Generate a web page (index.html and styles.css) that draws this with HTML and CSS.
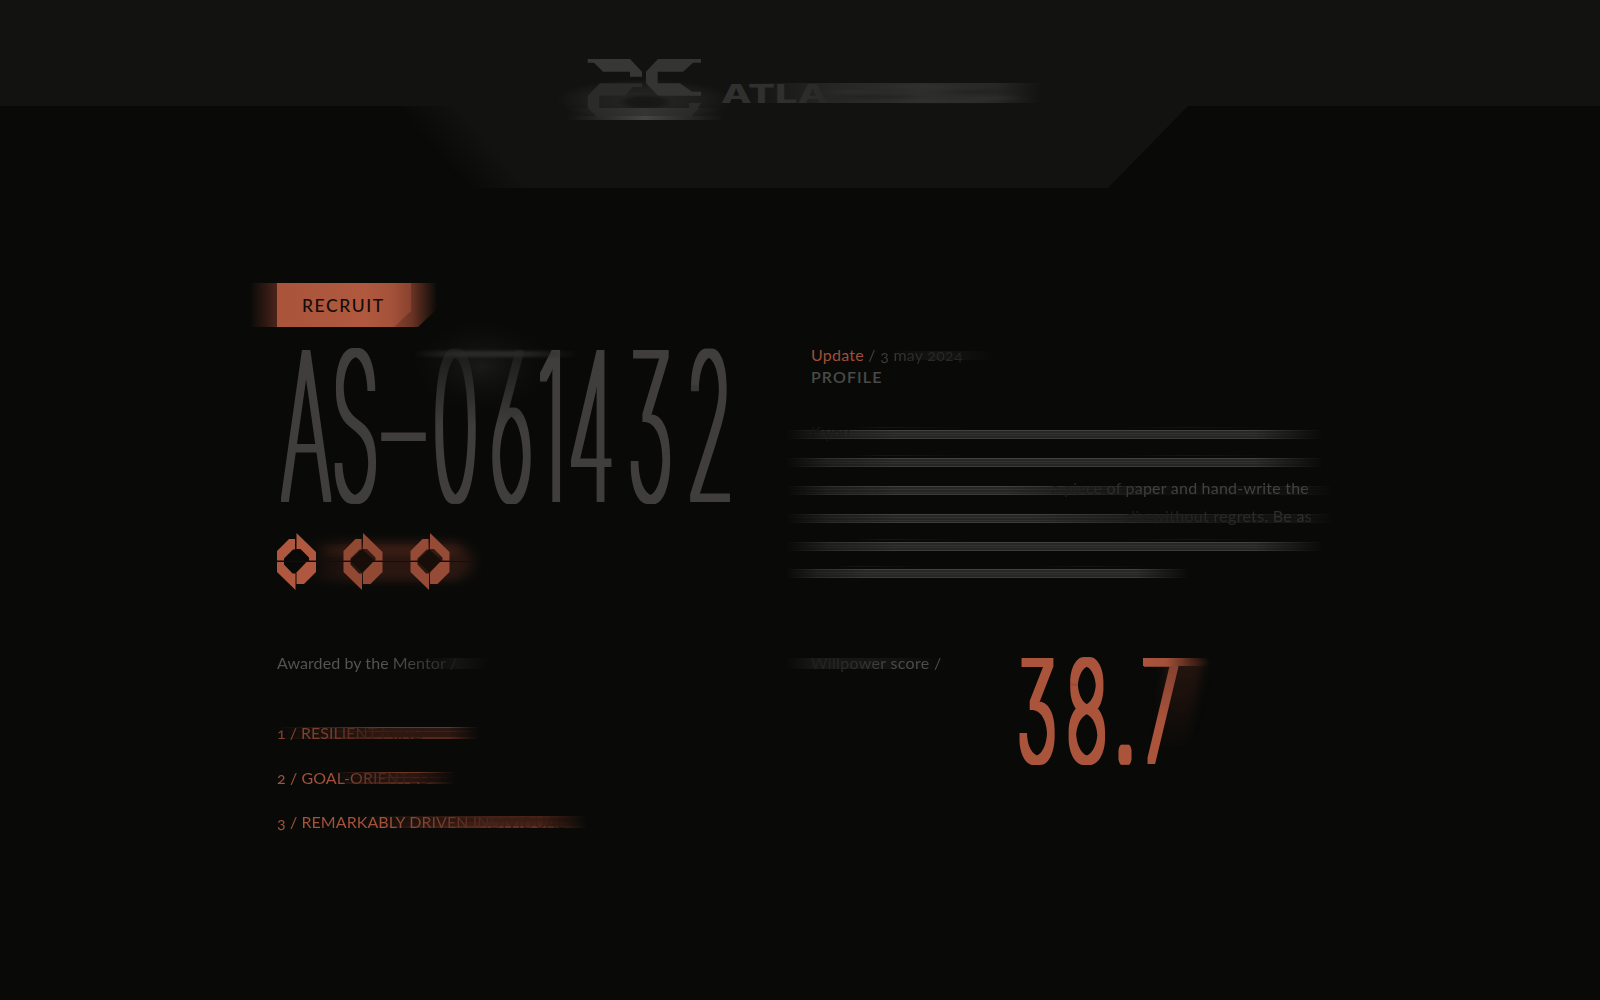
FILE: index.html
```html
<!DOCTYPE html>
<html lang="en">
<head>
<meta charset="utf-8">
<title>Recruit AS-061432</title>
<link rel="stylesheet" href="styles.css">
</head>
<body>
<header class="header">
  <svg class="header-art" width="1600" height="200" viewBox="0 0 1600 200">
    <defs>
      <linearGradient id="slope" gradientUnits="userSpaceOnUse" x1="396" y1="106" x2="432" y2="75">
        <stop offset="0" stop-color="#121311" stop-opacity="0"/><stop offset="1" stop-color="#121311"/>
      </linearGradient>
      <linearGradient id="sweep" x1="0" x2="1">
        <stop offset="0" stop-color="#2b2b29" stop-opacity="0"/><stop offset=".25" stop-color="#2b2b29"/><stop offset=".5" stop-color="#454543"/><stop offset=".75" stop-color="#2b2b29"/><stop offset="1" stop-color="#2b2b29" stop-opacity="0"/>
      </linearGradient>
      <radialGradient id="haze">
        <stop offset="0" stop-color="#272725"/><stop offset=".6" stop-color="#272725" stop-opacity=".6"/><stop offset="1" stop-color="#272725" stop-opacity="0"/>
      </radialGradient>
      <radialGradient id="core">
        <stop offset="0" stop-color="#161715"/><stop offset=".6" stop-color="#161715" stop-opacity=".8"/><stop offset="1" stop-color="#161715" stop-opacity="0"/>
      </radialGradient>
      <linearGradient id="wordTrail" gradientUnits="userSpaceOnUse" x1="740" y1="0" x2="1042" y2="0">
        <stop offset="0" stop-color="#242422" stop-opacity="0"/><stop offset=".3" stop-color="#262624"/><stop offset=".6" stop-color="#2e2e2c"/><stop offset=".85" stop-color="#272725"/><stop offset="1" stop-color="#252523" stop-opacity="0"/>
      </linearGradient>
      <linearGradient id="word" gradientUnits="userSpaceOnUse" x1="720" y1="0" x2="830" y2="0">
        <stop offset="0" stop-color="#30302e"/><stop offset=".6" stop-color="#30302e"/><stop offset="1" stop-color="#282826"/>
      </linearGradient>
      <filter id="soft" x="-20%" y="-80%" width="140%" height="260%" color-interpolation-filters="sRGB"><feGaussianBlur stdDeviation="10 1.2"/></filter>
    </defs>
    <path d="M0 0H1600V106H1188L1108 188H514L430 106H0Z" fill="#121311"/>
    <path d="M396 106H530V188H466Z" fill="#090a08"/>
    <path d="M396 106H530V188H466Z" fill="url(#slope)"/>
    <ellipse cx="644" cy="100" rx="88" ry="21" fill="url(#haze)"/>
    <path d="M587.700 59H630l12 12.700v5h-12v-5h-27l-9-9h-6.300z" fill="#373735"/>
    <path d="M658 59h43v3.700h-8l-10 9h-25.300v11.600H680l12 8.400h9v4h-43l-12-12.400V71.700z" fill="#343432"/>
    <path d="M600 83.300h42V87h-9l-8 8.700h-25.700V108h-11.600V95.700z" fill="#2b2b29"/>
    <path d="M689 103h12l-3 5h-9z" fill="#2b2b29"/>
    <ellipse cx="645" cy="102" rx="28" ry="8" fill="url(#core)"/>
    <rect x="566" y="108" width="158" height="8" fill="url(#sweep)" opacity=".6"/>
    <path d="M588 108h111l-9 10h-92z" fill="#333331" opacity=".5"/>
    <rect x="566" y="116" width="158" height="4" fill="url(#sweep)"/>
    <rect x="740" y="83" width="302" height="20" fill="url(#wordTrail)"/>
    <g filter="url(#soft)" fill="none" stroke="#343432" stroke-width="3" opacity=".5">
      <path d="M832 92h35M900 87h50M900 101h90M970 98h45"/>
      <path d="M850 97h60M950 92h62" stroke="#1d1e1c"/>
    </g>
    <text class="wordmark" x="721" y="102.500" textLength="107" lengthAdjust="spacingAndGlyphs" fill="url(#word)">ATLA</text>
  </svg>
</header>

<main class="board">
  <section class="identity">
    <div class="badge"><span class="badge-face">RECRUIT</span></div>
    <svg class="serial" width="520" height="190" viewBox="250 330 520 190">
      <defs>
        <linearGradient id="fadeDigits" gradientUnits="userSpaceOnUse" x1="0" y1="-150" x2="0" y2="-70">
          <stop offset="0" stop-color="#191918"/><stop offset=".35" stop-color="#262625"/><stop offset="1" stop-color="#403e3d"/>
        </linearGradient>
        <linearGradient id="cap" x1="0" x2="1">
          <stop offset="0" stop-color="#2a2a29" stop-opacity="0"/><stop offset=".3" stop-color="#2b2b2a"/><stop offset=".6" stop-color="#2b2b2a"/><stop offset="1" stop-color="#2a2a29" stop-opacity="0"/>
        </linearGradient>
        <radialGradient id="smoke">
          <stop offset="0" stop-color="#1a1a19"/><stop offset="1" stop-color="#0d0e0c" stop-opacity="0"/>
        </radialGradient>
        <filter id="fine" x="-10%" y="-60%" width="120%" height="220%" color-interpolation-filters="sRGB"><feGaussianBlur stdDeviation="1.5"/></filter>
        <filter id="thicken" filterUnits="userSpaceOnUse" x="250" y="330" width="520" height="190" color-interpolation-filters="sRGB"><feMorphology operator="dilate" radius="3 2"/></filter>
      </defs>
      <path d="M410 352H560V430H410Z" fill="none"/>
      <ellipse cx="482" cy="366" rx="72" ry="48" fill="url(#smoke)"/>
      <g filter="url(#thicken)">
        <g class="tall" transform="translate(0 500) scale(.38 1)">
          <text class="serial-text" x="806 935.5 1062 1199 1346 1452 1556 1711 1868">AS–<tspan fill="url(#fadeDigits)">06</tspan>1432</text>
        </g>
      </g>
      <rect x="413" y="351" width="165" height="6" fill="url(#cap)" filter="url(#fine)"/>
    </svg>
    <svg class="medals" width="240" height="80" viewBox="260 520 240 80">
      <defs>
        <filter id="glow" x="-20%" y="-40%" width="140%" height="180%" color-interpolation-filters="sRGB"><feGaussianBlur stdDeviation="7 4"/></filter>
        <linearGradient id="ember" x1="0" x2="1"><stop offset="0" stop-color="#52271c" stop-opacity=".15"/><stop offset=".3" stop-color="#52271c" stop-opacity=".65"/><stop offset="1" stop-color="#52271c" stop-opacity=".65"/></linearGradient>
        <g id="medal">
          <path d="M0 21.500V12L12 0h6v10.500h-2L7 19.500v2z"/>
          <path d="M19.500-6L39 13v8.500h-7V18.500L23.500 10h-4z"/>
          <path d="M0 23h7v2.500l8.500 9h3V51L0 33z"/>
          <path d="M29.500 23H39v10L27 45h-7.500V33.500z"/>
        </g>
      </defs>
      <path d="M315 541h142l14 13v17l-14 10H315z" fill="url(#ember)" filter="url(#glow)" opacity=".7"/>
      <rect x="326" y="547" width="132" height="7" fill="#743521" filter="url(#glow)" opacity=".3"/>
      <path d="M362 549l13 12-13 11-12-11zM429 549l13 12-13 11-12-11z" fill="#170e0a"/>
      <use href="#medal" x="277" y="539" fill="#af583f"/>
      <use href="#medal" x="343.500" y="539" fill="#924934"/>
      <use href="#medal" x="410.500" y="539" fill="#964b36"/>
      <path d="M277 561.500H472" stroke="#160d09" stroke-width="1"/>
    </svg>
    <p class="label awarded"><span>Awarded by the Mentor /</span></p>
    <ol class="traits">
      <li class="trait trait-one"><span>1 / RESILIENT MIND</span></li>
      <li class="trait trait-two"><span>2 / GOAL-ORIENTED</span></li>
      <li class="trait trait-three"><span>3 / REMARKABLY DRIVEN INDIVIDUAL</span></li>
    </ol>
  </section>

  <section class="profile">
    <p class="update"><span class="accent">Update</span> <span class="date">/ 3 may 2024</span></p>
    <h2 class="title">PROFILE</h2>
    <div class="lines">
      <p class="line line-start"><span class="ghost">If you</span></p>
      <p class="line"></p>
      <p class="line line-open"><span class="reveal">a piece of paper and hand-write the</span></p>
      <p class="line line-half"><span class="reveal dim">die without regrets. Be as</span></p>
      <p class="line"></p>
      <p class="line line-short"></p>
    </div>
    <div class="score">
      <p class="label willpower"><span>Willpower score /</span></p>
      <svg class="score-value" width="220" height="140" viewBox="1005 640 220 140">
        <defs>
          <linearGradient id="seven" gradientUnits="userSpaceOnUse" x1="0" y1="-104" x2="0" y2="-35">
            <stop offset="0" stop-color="#7d3f2e"/><stop offset="1" stop-color="#ab543c"/>
          </linearGradient>
          <linearGradient id="flare" x1="0" x2="1"><stop offset="0" stop-color="#ab543c"/><stop offset=".35" stop-color="#a3503a"/><stop offset=".6" stop-color="#6d3526"/><stop offset="1" stop-color="#4a2318" stop-opacity="0"/></linearGradient>
          <linearGradient id="ash" x1="0" y1="0" x2="0" y2="1"><stop offset="0" stop-color="#3a1c14" stop-opacity=".6"/><stop offset="1" stop-color="#3a1c14" stop-opacity="0"/></linearGradient>
          <filter id="blur" x="-40%" y="-20%" width="180%" height="140%" color-interpolation-filters="sRGB"><feGaussianBlur stdDeviation="5 1"/></filter>
          <filter id="thickenScore" filterUnits="userSpaceOnUse" x="1005" y="640" width="220" height="140" color-interpolation-filters="sRGB"><feMorphology operator="dilate" radius="3 3"/></filter>
        </defs>
        <path d="M1166 660h38l-18 90h-28z" fill="url(#ash)" filter="url(#blur)"/>
        <g filter="url(#thickenScore)">
          <g class="tall" transform="translate(0 761) scale(.49 1)">
            <text class="score-text" x="2116 2218 2296 2370">38<tspan class="dot">.</tspan><tspan fill="url(#seven)">7</tspan></text>
          </g>
        </g>
        <rect x="1143" y="658" width="66" height="8" fill="url(#flare)"/>
      </svg>
    </div>
  </section>
</main>
</body>
</html>
```
FILE: styles.css
```css
* { box-sizing: border-box; }
body { margin: 0; width: 1600px; height: 1000px; overflow: hidden; background: #090a08; color: #50504e; font-family: Lato, "Open Sans", sans-serif; font-weight: 400; font-size: 16px; }
p, h2, ol { margin: 0; padding: 0; list-style: none; }
svg { display: block; overflow: visible; }
.header { height: 200px; }
.wordmark { font: 800 25.5px Inter, sans-serif; }

.board { display: grid; grid-template-columns: 534px 560px; padding: 83px 0 0 277px; }
.identity, .profile { display: flex; flex-direction: column; min-width: 0; }

.badge { width: 188px; height: 44px; margin-left: -27px; padding-left: 27px; background: linear-gradient(90deg, transparent, #4a241a 27px, #8e4631 70px, #8e4631 140px, #6a3323 162px, transparent 187px); clip-path: polygon(0 0, 100% 0, 100% 25px, 168px 100%, 0 100%); }
.badge-face { display: flex; align-items: center; width: 134px; height: 44px; padding: 0 0 0 25px; color: #140c09; font-weight: 500; font-size: 17.5px; letter-spacing: 1.55px; white-space: nowrap; background: linear-gradient(90deg, #a9543b, #b0593f 65%, #a5523a 85%, #88432f); clip-path: polygon(0 0, 100% 0, 100% 28px, 117px 100%, 0 100%); }

.serial { margin: 3px 0 0 -27px; }
.tall text { font-family: Inter, sans-serif; font-weight: 100; text-anchor: middle; font-feature-settings: "cv09" 1, "cv03" 1; }
.serial-text { font-size: 203px; fill: #403e3d; }
.score-text { font-size: 137.5px; fill: #ab543c; }
.dot { font-weight: 300; }
.medals { margin-left: -17px; }

.label { height: 22px; line-height: 22px; font-size: 16px; }
.label span { background-clip: text; color: transparent; white-space: nowrap; }
.awarded { width: 212px; margin-top: 52px; background: linear-gradient(90deg, transparent 145px, #141413 180px, transparent) 0 6px / 100% 11px no-repeat; }
.awarded span { letter-spacing: .08px; background-image: linear-gradient(90deg, #545452 60%, #333332 88%, #1e1e1d); }
.traits { display: flex; flex-direction: column; gap: 22.500px; margin-top: 48px; }
.trait { height: 22px; line-height: 22px; font-size: 16px; white-space: nowrap; font-variant-numeric: oldstyle-nums; background-repeat: no-repeat; background-position: 0 5px; background-size: 100% 12px; }
.trait span { background-clip: text; color: transparent; }
.trait-one { width: 202px; background-image: linear-gradient(90deg, #090a08, #090a0800 50%), linear-gradient(#6b3524 0 1px, #2e1710 1px 4px, #43211a 4px 5px, #2e1710 5px 10px, #552819 10px 12px); -webkit-mask-image: linear-gradient(90deg, #000 85%, transparent); }
.trait-one span { background-image: linear-gradient(90deg, #8a4431, #7c3d2b 35%, #41211a 62%, #2f1811 80%); }
.trait-two { width: 178px; background-image: linear-gradient(90deg, #090a08 30%, #090a0800 65%), linear-gradient(#6b3423 0 1px, #2a1610 1px 5px, #42221a 5px 6px, #29150f 6px 10px, #57291c 10px 12px); -webkit-mask-image: linear-gradient(90deg, #000 80%, transparent); }
.trait-two span { letter-spacing: .1px; background-image: linear-gradient(90deg, #a5523a 35%, #552b1f 65%, #28140e 94%); }
.trait-three { width: 310px; background-image: linear-gradient(90deg, #090a08 25%, #090a0800 70%), linear-gradient(#462318 0 2px, #3b1d14 2px 6px, #452217 6px 10px, #613020 10px 12px); -webkit-mask-image: linear-gradient(90deg, #000 85%, transparent); }
.trait-three span { letter-spacing: .08px; background-image: linear-gradient(90deg, #a5523a 38%, #6c3627 60%, #3c1d14 78%, #3a1c13); }

.profile { padding-top: 61px; }
.update { width: 182px; height: 22px; line-height: 22px; font-size: 16px; letter-spacing: .25px; white-space: nowrap; font-variant-numeric: oldstyle-nums; background: linear-gradient(90deg, transparent 45%, #161615 70%, transparent) 0 7px / 100% 9px no-repeat; }
.accent { color: #a04e37; }
.date { background: linear-gradient(90deg, #444442, #2d2d2c 45%, #242423); background-clip: text; color: transparent; }
.title { height: 22px; line-height: 22px; color: #4a4a48; font-weight: 600; font-size: 16px; letter-spacing: 1.1px; }
.lines { display: grid; grid-auto-rows: 27.900px; width: 550px; margin: 32px 0 0 -26px; }
.line { height: 28px; padding: 0 30px; width: 540px; font-size: 16px; line-height: 24px; white-space: nowrap; background: linear-gradient(#424241 0 1px, #272726 1px 3px, #333332 3px 4px, #252524 4px 5px, #30302f 5px 6px, #262625 6px 8px, #3b3b3a 8px 9px) 0 10px / 100% 9px no-repeat, linear-gradient(90deg, transparent 12%, #171716 18%, transparent 35%, transparent 60%, #151514 75%, transparent 90%) 0 7px / 100% 1px no-repeat; -webkit-mask-image: linear-gradient(90deg, transparent, #000a 8%, #000 20%, #000 87%, transparent); }
.line-start { padding-left: 26px; }
.ghost { color: #232322; }
.line-short { width: 405px; }
.line-open, .line-half { display: flex; justify-content: flex-end; width: 550px; background-position: 0 10px; background-size: 100% 9px; padding-right: 26px; -webkit-mask-image: linear-gradient(90deg, transparent, #000a 8%, #000 20%, #000 94%, transparent); }
.line-open { background-image: linear-gradient(90deg, transparent 40%, #090a08e6 72%, #090a08b3 100%), linear-gradient(#424241 0 1px, #272726 1px 3px, #333332 3px 4px, #252524 4px 6px, #30302f 6px 7px, #262625 7px 8px, #3b3b3a 8px 9px); }
.line-half { padding-right: 23px; background-image: linear-gradient(90deg, transparent 45%, #090a08b3 80%, #090a08b3 100%), linear-gradient(#424241 0 1px, #272726 1px 3px, #333332 3px 4px, #252524 4px 6px, #30302f 6px 7px, #262625 7px 8px, #3b3b3a 8px 9px); }
.reveal { letter-spacing: .22px; background: linear-gradient(90deg, #1c1c1b, #2a2a29 20%, #434341 40%); background-clip: text; color: transparent; }
.dim { letter-spacing: .3px; background-image: linear-gradient(90deg, #1c1c1b, #262625 40%, #323231); }
.score { display: flex; margin-top: 53px; }
.willpower { width: 194px; height: 22px; margin: 12px 0 0 -26px; padding-left: 26px; background: linear-gradient(90deg, transparent, #181817 30px, #151514 90px, transparent 160px) 0 6px / 100% 11px no-repeat; }
.willpower span { letter-spacing: .32px; background-image: linear-gradient(90deg, #1f1f1e, #323231 40%, #4c4c4a 62%); }
.score-value { margin-left: 26px; }
```
